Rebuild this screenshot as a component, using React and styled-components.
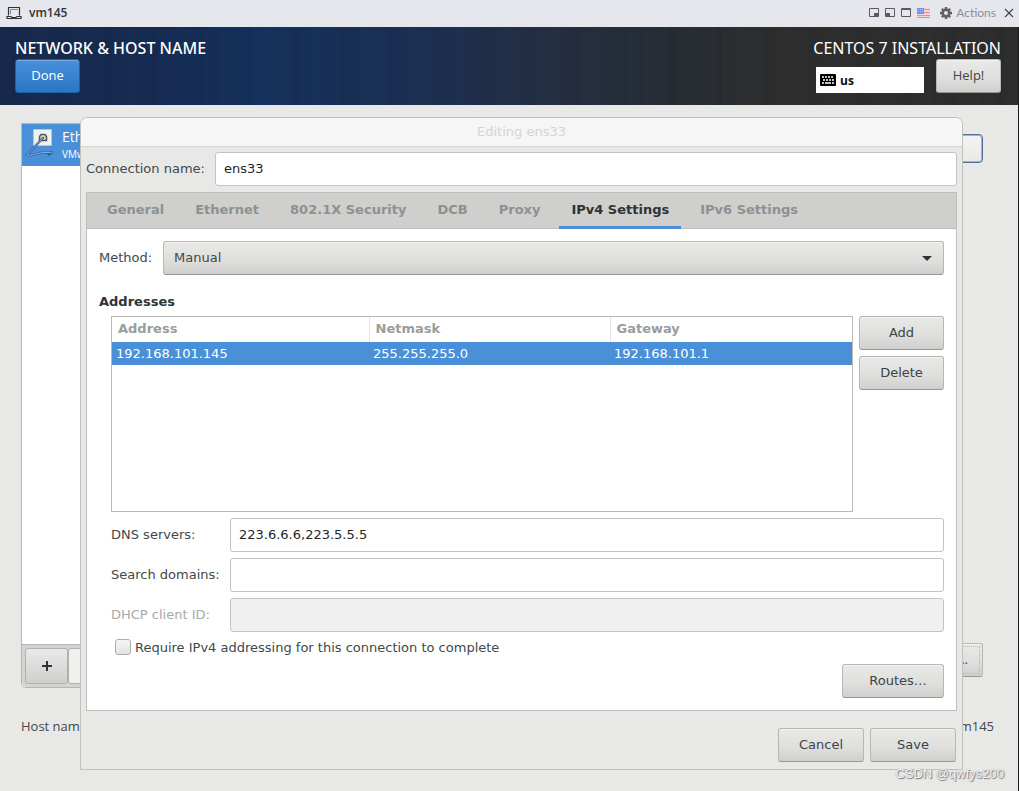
import React, { useState } from 'react';
import styled, { createGlobalStyle } from 'styled-components';

const GlobalStyle = createGlobalStyle`
    * {
        box-sizing: border-box;
    }
    body {
        margin: 0;
        background: #e8e8e6;
    }
    button, input, select {
        font: inherit;
        color: inherit;
    }
`;

const Page = styled.div`
    display: flex;
    flex-direction: column;
    min-height: 100vh;
    color: #41484a;
    font-family: 'Open Sans', 'Noto Sans', sans-serif;
    font-size: 13px;
`;

const ConsoleBar = styled.header`
    display: flex;
    align-items: center;
    height: 27px;
    padding: 0 5px 2px 6px;
    background: #e6e7ec;
`;

const ConsoleTitle = styled.h1`
    flex-grow: 1;
    margin: 0 0 0 7px;
    color: #333;
    font-family: 'Open Sans', sans-serif;
    font-size: 12px;
    font-weight: 600;
    line-height: 24px;
`;

const ConsoleTools = styled.div`
    display: flex;
    align-items: center;
`;

const ToolButton = styled.button`
    display: flex;
    align-items: center;
    gap: 4px;
    margin-left: ${(props) => props.$gap || 4}px;
    padding: 0;
    border: none;
    background: none;
    color: #8d8e93;
    font-family: 'Lato', sans-serif;
    font-size: 12px;
    line-height: 24px;
`;

const Screen = styled.div`
    position: relative;
    display: flex;
    flex-grow: 1;
    flex-direction: column;
    overflow: hidden;
    border-right: 1px solid #1c1c1c;
`;

const Banner = styled.div`
    display: flex;
    justify-content: space-between;
    height: 78px;
    padding: 11px 17px 0 15px;
    color: white;
    background:
        repeating-linear-gradient(90deg, transparent 0 9px, #0a183018 13px 15px, transparent 19px 31px, #2a4f8a0c 36px, transparent 41px 47px),
        linear-gradient(90deg, #17284a 0%, #162b52 15%, #15305b 25%, #1a2f52 40%, #222e44 52%, #262d36 64%, #2d2d2d 76%);
`;

const BannerTitle = styled.h2`
    margin: 0;
    font-family: 'Noto Sans', sans-serif;
    font-size: 16px;
    font-weight: ${(props) => props.$weight || 400};
    line-height: 21px;
    text-align: ${(props) => props.$align || 'left'};
`;

const BannerTools = styled.div`
    display: flex;
    align-items: flex-end;
    justify-content: flex-end;
    gap: 12px;
`;

const KeyboardLayout = styled.button`
    display: flex;
    align-items: center;
    gap: 4px;
    width: 108px;
    height: 26px;
    padding: 0 4px;
    border: none;
    background: white;
    color: #111;
    font-size: 12px;
    font-weight: 700;
`;

const Button = styled.button`
    min-width: ${(props) => props.$width || 86}px;
    height: 34px;
    padding: 0 14px 2px;
    border: 1px solid #b8b8b3;
    border-bottom-color: #979792;
    border-radius: 3px;
    background: linear-gradient(#e9e9e8, #dededc 60%, #cfcfcd);
    box-shadow: inset 0 1px #f3f3f2;
    color: #3c4446;
`;

const DoneButton = styled(Button)`
    border-color: #1f5fa8;
    background: linear-gradient(#4a90d9, #2a76c6);
    box-shadow: inset 0 1px #75aae2;
    color: white;
`;

const Spoke = styled.main`
    display: flex;
    flex-grow: 1;
    flex-direction: column;
    padding: 18px 24px 55px 21px;
`;

const Devices = styled.div`
    display: flex;
    flex-grow: 1;
    justify-content: space-between;
`;

const DeviceColumn = styled.div`
    display: flex;
    flex-direction: column;
    width: 260px;
    border: 1px solid #b6b6b3;
    border-radius: 0 0 5px 5px;
    background: white;
`;

const DeviceRow = styled.button`
    display: flex;
    gap: 8px;
    height: 42px;
    padding: 4px 3px;
    border: none;
    background: #4a90d9;
    color: white;
    text-align: left;
    white-space: nowrap;
`;

const DeviceName = styled.span`
    display: block;
    font-size: 14px;
    line-height: 18px;
`;

const DeviceVendor = styled.span`
    display: block;
    font-size: 10px;
    line-height: 16px;
`;

const DeviceToolbar = styled.div`
    display: flex;
    margin-top: auto;
    padding: 3px;
    border-top: 1px solid #b6b6b3;
    border-radius: 0 0 5px 5px;
    background: #d3d3d1;
`;

const SquareButton = styled.button`
    display: flex;
    align-items: center;
    justify-content: center;
    width: 43px;
    height: 36px;
    padding: 0;
    border: 1px solid #b0b0ad;
    border-radius: 3px;
    background: ${(props) => (props.disabled ? '#f0f0ef' : 'linear-gradient(#e9e9e8, #cfcfcd)')};
`;

const DeviceActions = styled.div`
    display: flex;
    flex-direction: column;
    align-items: flex-end;
    justify-content: space-between;
    padding: 11px 11px 11px 0;
`;

const Toggle = styled.button`
    width: 80px;
    height: 29px;
    border: 1px solid #4f7099;
    border-radius: 4px;
    background: linear-gradient(#f3f3f2, #e9e9e8);
    box-shadow: inset 0 0 0 1px #9db4cf;
`;

const ConfigureButton = styled(Button)`
    outline: 1px dotted #b8b8b4;
    outline-offset: -4px;
    text-align: right;
`;

const HostRow = styled.div`
    display: flex;
    justify-content: space-between;
    margin-top: 28px;
    line-height: 20px;
`;

const DialogLayer = styled.div`
    position: absolute;
    inset: 0;
    padding: 90px 55px 21px 80px;
`;

const Dialog = styled.section`
    display: flex;
    flex-direction: column;
    height: 100%;
    border: 1px solid #c0c0bd;
    border-radius: 7px 7px 0 0;
    background: #e8e8e6;
    font-family: 'DejaVu Sans', sans-serif;
`;

const DialogTitle = styled.h2`
    margin: 0;
    border-bottom: 1px solid #d4d4d2;
    border-radius: 6px 6px 0 0;
    background: #f6f6f6;
    color: #d3d5d5;
    font-size: 13px;
    font-weight: 400;
    line-height: 28px;
    text-align: center;
`;

const Form = styled.form`
    display: flex;
    flex-grow: 1;
    flex-direction: column;
    padding: 5px;
`;

const Field = styled.div`
    display: flex;
    align-items: center;
    margin-bottom: 6px;
`;

const FieldLabel = styled.label`
    flex-shrink: 0;
    width: ${(props) => props.$width}px;
    padding-bottom: 2px;
    color: ${(props) => (props.$disabled ? '#a5a9a9' : 'inherit')};
`;

const TextInput = styled.input`
    flex-grow: 1;
    min-width: 0;
    height: 34px;
    padding: 0 8px 2px;
    border: 1px solid #c3c3c0;
    border-radius: 3px;
    outline: none;
    background: ${(props) => (props.disabled ? '#f0f0f0' : 'white')};
    color: #232729;
`;

const Notebook = styled.div`
    display: flex;
    flex-grow: 1;
    flex-direction: column;
    border: 1px solid #bebebb;
    background: white;
`;

const TabBar = styled.div`
    display: flex;
    gap: 7px;
    height: 36px;
    padding: 0 8px;
    border-bottom: 1px solid #bebebb;
    background: #cfcfcd;
`;

const Tab = styled.button`
    height: 36px;
    padding: 0 12px;
    border: none;
    border-bottom: 3px solid ${(props) => (props.$active ? '#4a90d9' : 'transparent')};
    background: none;
    color: ${(props) => (props.$active ? '#2e3436' : '#8d9191')};
    font-weight: 700;
    white-space: nowrap;
`;

const TabPane = styled.div`
    display: flex;
    flex-grow: 1;
    flex-direction: column;
    padding: 12px;
`;

const SelectBox = styled.div`
    position: relative;
    flex-grow: 1;
`;

const Select = styled.select`
    display: block;
    width: 100%;
    height: 34px;
    padding: 0 10px 2px;
    border: 1px solid #b8b8b3;
    border-bottom-color: #979792;
    border-radius: 3px;
    background: linear-gradient(#e9e9e8, #dededc 60%, #cfcfcd);
    box-shadow: inset 0 1px #f3f3f2;
    appearance: none;
`;

const SelectArrow = styled.svg`
    position: absolute;
    top: 15px;
    right: 12px;
    pointer-events: none;
`;

const SectionTitle = styled.h3`
    margin: 12px 0 5px;
    color: #2e3436;
    font-size: 13px;
    line-height: 18px;
`;

const Indented = styled.div`
    display: flex;
    flex-grow: 1;
    flex-direction: column;
    padding-left: 12px;
`;

const AddressArea = styled.div`
    display: flex;
    flex-grow: 1;
    gap: 6px;
    margin-bottom: 6px;
`;

const TableFrame = styled.div`
    flex-grow: 1;
    border: 1px solid #b9b9b6;
`;

const Table = styled.table`
    width: 100%;
    border-collapse: collapse;
    table-layout: fixed;
    text-align: left;
`;

const HeadCell = styled.th`
    width: ${(props) => props.$width || 'auto'};
    height: 25px;
    padding: 0 6px 2px;
    border-left: 1px solid #e3e3e1;
    color: #999d9d;

    &:first-child {
        border-left: none;
    }
`;

const Cell = styled.td`
    height: 23px;
    padding: 0 4px 1px;
    background: #4a90d9;
    color: white;
`;

const ButtonColumn = styled.div`
    display: flex;
    flex-direction: column;
    gap: 6px;
`;

const CheckLabel = styled.label`
    display: flex;
    align-items: center;
    gap: 4px;
    height: 18px;
    padding-left: 4px;
`;

const Checkbox = styled.input`
    width: 16px;
    height: 16px;
    margin: 0;
    border: 1px solid #adada9;
    border-radius: 3px;
    background: linear-gradient(#f6f6f5, #e3e3e1);
    appearance: none;
`;

const RoutesButton = styled(Button)`
    align-self: flex-end;
    margin-top: 8px;
    padding-left: 24px;
`;

const DialogFooter = styled.div`
    display: flex;
    justify-content: flex-end;
    gap: 6px;
    padding: 17px 1px 2px;
`;

const Watermark = styled.div`
    position: absolute;
    right: 14px;
    bottom: 7px;
    color: #f6f6f6;
    font-family: 'Liberation Sans', sans-serif;
    font-size: 13px;
    line-height: 20px;
    text-shadow: 1px 1px 1px #777, 0 0 1px #888;
`;

const MonitorIcon = () => (
    <svg width="16" height="14" viewBox="0 0 16 14" fill="none" stroke="#333">
        <path d="M2.5 9.5V1.5h11v8" strokeWidth="1.2" />
        <path d="M4.5 8V3.5H12" stroke="#88898c" />
        <path d="M1 10.5h4l1 1h4l1-1h4v2H1z" strokeWidth="1.2" />
    </svg>
);

const WindowIcon = ({ kind }) => (
    <svg width="10" height="9" viewBox="0 0 10 9" fill="none" stroke="#5a5a5e">
        <path d="M.5 .5h9v8h-9z" />
        {kind === 'right' && <path d="M5 5h4v3H5z" fill="#5a5a5e" stroke="none" />}
        {kind === 'left' && <path d="M1 5h4v3H1z" fill="#5a5a5e" stroke="none" />}
        {kind === 'full' && <path d="M1 1.5h8" />}
    </svg>
);

const FlagIcon = () => (
    <svg width="13" height="10" viewBox="0 0 13 10">
        <path d="M0 0h13v10H0z" fill="#f3d5d7" />
        <path d="M0 1.5h13M0 4.5h13M0 7.5h13M0 9.5h13" stroke="#e58f8a" />
        <path d="M0 0h7v6H0z" fill="#6f93e6" />
        <path d="M1 1.5h5M1 3.5h5" stroke="#b4c8f5" strokeDasharray="1 1" />
    </svg>
);

const GearIcon = () => (
    <svg width="12" height="12" viewBox="0 0 12 12" fill="none" stroke="#606064">
        <circle cx="6" cy="6" r="3.3" strokeWidth="2.6" />
        <path d="M6 0v2M6 10v2M0 6h2M10 6h2M1.8 1.8l1.4 1.4M8.8 8.8l1.4 1.4M1.8 10.2l1.4-1.4M8.8 3.2l1.4-1.4" strokeWidth="2.4" />
    </svg>
);

const CloseIcon = () => (
    <svg width="10" height="10" viewBox="0 0 10 10" stroke="#444" strokeWidth="1.1">
        <path d="M1 1l8 8M9 1L1 9" />
    </svg>
);

const KeyboardIcon = () => (
    <svg width="16" height="12" viewBox="0 0 16 12">
        <rect width="16" height="12" rx="1" fill="#000" />
        <path d="M2 3h12M3 6h11" stroke="#fff" strokeWidth="1.6" strokeDasharray="2 1" />
        <path d="M2 9h2M5 9h6M12 9h2" stroke="#fff" strokeWidth="1.4" />
    </svg>
);

const EthernetIcon = () => (
    <svg width="29" height="32" viewBox="0 0 29 32" fill="none">
        <path d="M8.5 1.5h18v16h-18z" fill="#f1f1ec" stroke="#c6c5b8" />
        <path d="M14.5 12.5V8.5l1.5-2h4l1.5 2v4z" fill="#d6d6cc" stroke="#555a58" strokeWidth="1.5" />
        <path d="M18 10L1.8 27c3 1.5 8-1.5 13-2s9-1 12-.5l-3 2" stroke="#2d5d9a" strokeWidth="2.4" strokeLinejoin="round" strokeLinecap="round" />
        <path d="M18 10L1.8 27c3 1.5 8-1.5 13-2s9-1 12-.5" stroke="#8db7e6" />
    </svg>
);

const tabs = ['General', 'Ethernet', '802.1X Security', 'DCB', 'Proxy', 'IPv4 Settings', 'IPv6 Settings'];

const AddressTable = () => (
    <TableFrame>
        <Table>
            <thead>
                <tr>
                    <HeadCell $width="257px">Address</HeadCell>
                    <HeadCell $width="241px">Netmask</HeadCell>
                    <HeadCell>Gateway</HeadCell>
                </tr>
            </thead>
            <tbody>
                <tr>
                    <Cell>192.168.101.145</Cell>
                    <Cell>255.255.255.0</Cell>
                    <Cell>192.168.101.1</Cell>
                </tr>
            </tbody>
        </Table>
    </TableFrame>
);

const EditConnectionDialog = () => {
    const [activeTab, setActiveTab] = useState('IPv4 Settings');
    const [name, setName] = useState('ens33');
    const [dns, setDns] = useState('223.6.6.6,223.5.5.5');
    const [domains, setDomains] = useState('');

    const handleChange = (onChange) => (e) => {
        onChange(e.target.value);
    }

    return (
        <Dialog role="dialog" aria-labelledby="dialog-title">
            <DialogTitle id="dialog-title">Editing ens33</DialogTitle>
            <Form onSubmit={(e) => e.preventDefault()}>
                <Field>
                    <FieldLabel htmlFor="name" $width={129}>Connection name:</FieldLabel>
                    <TextInput id="name" value={name} onChange={handleChange(setName)} />
                </Field>
                <Notebook>
                    <TabBar role="tablist">
                        {tabs.map((tab) => (
                            <Tab
                                key={tab}
                                type="button"
                                role="tab"
                                aria-selected={tab === activeTab}
                                $active={tab === activeTab}
                                onClick={() => setActiveTab(tab)}
                            >
                                {tab}
                            </Tab>
                        ))}
                    </TabBar>
                    <TabPane>
                        <Field>
                            <FieldLabel htmlFor="method" $width={64}>Method:</FieldLabel>
                            <SelectBox>
                                <Select id="method" defaultValue="manual">
                                    <option value="manual">Manual</option>
                                </Select>
                                <SelectArrow width="10" height="5" viewBox="0 0 10 5">
                                    <path d="M0 0h10L5 5z" fill="#2e3436" />
                                </SelectArrow>
                            </SelectBox>
                        </Field>
                        <SectionTitle>Addresses</SectionTitle>
                        <Indented>
                            <AddressArea>
                                <AddressTable />
                                <ButtonColumn>
                                    <Button type="button" $width={85}>Add</Button>
                                    <Button type="button" $width={85}>Delete</Button>
                                </ButtonColumn>
                            </AddressArea>
                            <Field>
                                <FieldLabel htmlFor="dns" $width={119}>DNS servers:</FieldLabel>
                                <TextInput id="dns" value={dns} onChange={handleChange(setDns)} />
                            </Field>
                            <Field>
                                <FieldLabel htmlFor="domains" $width={119}>Search domains:</FieldLabel>
                                <TextInput id="domains" value={domains} onChange={handleChange(setDomains)} />
                            </Field>
                            <Field>
                                <FieldLabel htmlFor="dhcp" $width={119} $disabled>DHCP client ID:</FieldLabel>
                                <TextInput id="dhcp" disabled />
                            </Field>
                            <CheckLabel>
                                <Checkbox type="checkbox" />
                                Require IPv4 addressing for this connection to complete
                            </CheckLabel>
                            <RoutesButton type="button" $width={102}>Routes…</RoutesButton>
                        </Indented>
                    </TabPane>
                </Notebook>
                <DialogFooter>
                    <Button type="button">Cancel</Button>
                    <Button type="submit">Save</Button>
                </DialogFooter>
            </Form>
        </Dialog>
    );
}

const App = () => (
    <Page>
        <GlobalStyle />
        <ConsoleBar>
            <MonitorIcon />
            <ConsoleTitle>vm145</ConsoleTitle>
            <ConsoleTools>
                <ToolButton aria-label="Dock right"><WindowIcon kind="right" /></ToolButton>
                <ToolButton $gap={6} aria-label="Dock left"><WindowIcon kind="left" /></ToolButton>
                <ToolButton $gap={6} aria-label="Full screen"><WindowIcon kind="full" /></ToolButton>
                <ToolButton $gap={6} aria-label="Keyboard"><FlagIcon /></ToolButton>
                <ToolButton $gap={10}><GearIcon />Actions</ToolButton>
                <ToolButton $gap={8} aria-label="Close"><CloseIcon /></ToolButton>
            </ConsoleTools>
        </ConsoleBar>
        <Screen>
            <Banner>
                <div>
                    <BannerTitle $weight={500}>NETWORK &amp; HOST NAME</BannerTitle>
                    <DoneButton $width={65}>Done</DoneButton>
                </div>
                <div>
                    <BannerTitle $align="right">CENTOS 7 INSTALLATION</BannerTitle>
                    <BannerTools>
                        <KeyboardLayout><KeyboardIcon />us</KeyboardLayout>
                        <Button $width={65}>Help!</Button>
                    </BannerTools>
                </div>
            </Banner>
            <Spoke>
                <Devices>
                    <DeviceColumn>
                        <DeviceRow>
                            <EthernetIcon />
                            <span>
                                <DeviceName>Eth</DeviceName>
                                <DeviceVendor>VMw</DeviceVendor>
                            </span>
                        </DeviceRow>
                        <DeviceToolbar>
                            <SquareButton aria-label="Add device">
                                <svg width="10" height="10" viewBox="0 0 10 10" stroke="#2e3436" strokeWidth="2">
                                    <path d="M5 0v10M0 5h10" />
                                </svg>
                            </SquareButton>
                            <SquareButton disabled aria-label="Remove device" />
                        </DeviceToolbar>
                    </DeviceColumn>
                    <DeviceActions>
                        <Toggle role="switch" aria-checked="true" aria-label="Connection" />
                        <ConfigureButton>...</ConfigureButton>
                    </DeviceActions>
                </Devices>
                <HostRow>
                    <span>Host name</span>
                    <span>vm145</span>
                </HostRow>
            </Spoke>
            <DialogLayer>
                <EditConnectionDialog />
            </DialogLayer>
            <Watermark>CSDN @qwfys200</Watermark>
        </Screen>
    </Page>
);

export default App;
